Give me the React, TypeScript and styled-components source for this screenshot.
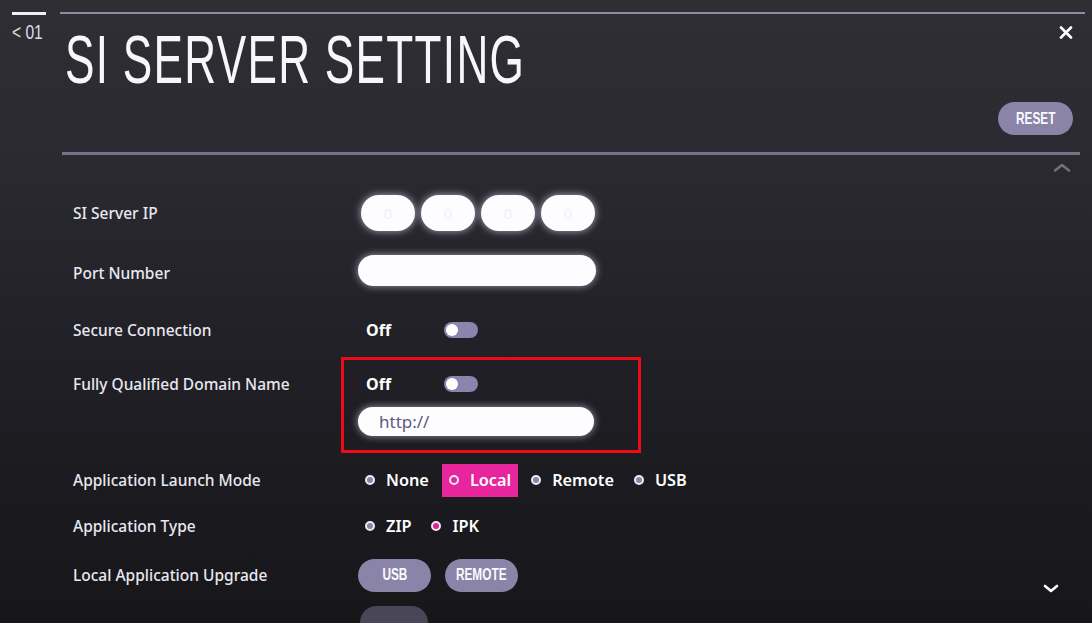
import React from 'react';
import styled, { createGlobalStyle } from 'styled-components';

const GlobalStyle = createGlobalStyle`
  html, body {
    margin: 0;
    padding: 0;
    background: #1b1a1f;
  }
  #root {
    width: 1092px;
    height: 623px;
    overflow: hidden;
  }
`;

export default function App() {
    return (
        <>
            <GlobalStyle />
            <Screen>
                <Rail>
                    <RailBar />
                    <RailLabel>&lt; 01</RailLabel>
                </Rail>
                <Main>
                    <TopRule />
                    <TitleBar>
                        <Title>SI SERVER SETTING</Title>
                        <CloseButton aria-label="close">
                            <svg width="14" height="13" viewBox="0 0 14 13">
                                <path d="M2 1.5 L12 11.5 M12 1.5 L2 11.5" stroke="#fff" strokeWidth="2.6" strokeLinecap="round" />
                            </svg>
                        </CloseButton>
                    </TitleBar>
                    <ResetRow>
                        <PillButton $width={75} $height={33}>
                            <ButtonText>RESET</ButtonText>
                        </PillButton>
                    </ResetRow>
                    <HeaderRule />
                    <ScrollUpRow>
                        <svg width="18" height="9" viewBox="0 0 18 9">
                            <path d="M2 7.5 L9 2 L16 7.5" stroke="#74727f" strokeWidth="2.4" fill="none" strokeLinecap="round" strokeLinejoin="round" />
                        </svg>
                    </ScrollUpRow>
                    <Form>
                        <Row $h={54}>
                            <Label>SI Server IP</Label>
                            <IpGroup>
                                {['0', '0', '0', '0'].map((d, i) => (
                                    <IpField key={i}>{d}</IpField>
                                ))}
                            </IpGroup>
                        </Row>
                        <Row $h={60}>
                            <Label $pad={6}>Port Number</Label>
                            <TextField $width={238} $height={31} />
                        </Row>
                        <Row $h={60}>
                            <Label>Secure Connection</Label>
                            <Switch />
                        </Row>
                        <Row $h={92} $top>
                            <Label $line={24} $pad={12}>Fully Qualified Domain Name</Label>
                            <ControlStack>
                                <Switch />
                                <TextField $width={236} $height={29}>http://</TextField>
                            </ControlStack>
                        </Row>
                        <Row $h={56}>
                            <Label>Application Launch Mode</Label>
                            <Options>
                                <Option>
                                    <Radio />None
                                </Option>
                                <Option $focused>
                                    <Radio $hollow />Local
                                </Option>
                                <Option>
                                    <Radio />Remote
                                </Option>
                                <Option>
                                    <Radio />USB
                                </Option>
                            </Options>
                        </Row>
                        <Row $h={36}>
                            <Label>Application Type</Label>
                            <Options>
                                <Option>
                                    <Radio />ZIP
                                </Option>
                                <Option>
                                    <Radio $selected />IPK
                                </Option>
                            </Options>
                        </Row>
                        <Row $h={62}>
                            <Label>Local Application Upgrade</Label>
                            <ButtonGroup>
                                <PillButton $width={73} $height={33}>
                                    <ButtonText>USB</ButtonText>
                                </PillButton>
                                <PillButton $width={73} $height={33}>
                                    <ButtonText>REMOTE</ButtonText>
                                </PillButton>
                            </ButtonGroup>
                        </Row>
                        <Row $h={40} $top>
                            <Label />
                            <FadedButton />
                        </Row>
                    </Form>
                    <ScrollDown>
                        <svg width="16" height="9" viewBox="0 0 16 9">
                            <path d="M2 2 L8 7 L14 2" stroke="#fff" strokeWidth="2.6" fill="none" strokeLinecap="round" strokeLinejoin="round" />
                        </svg>
                    </ScrollDown>
                </Main>
                <Annotation />
            </Screen>
        </>
    );
}

function Switch() {
    return (
        <SwitchRow>
            <SwitchText>Off</SwitchText>
            <Track>
                <Knob />
            </Track>
        </SwitchRow>
    );
}

const Screen = styled.div`
    position: relative;
    display: flex;
    width: 1092px;
    height: 623px;
    overflow: hidden;
    color: #fff;
    font-family: 'Noto Sans', 'Liberation Sans', sans-serif;
    background: linear-gradient(
        180deg,
        #2f2e35 0%,
        #2b2a31 25%,
        #232229 50%,
        #1c1b20 75%,
        #171619 100%
    );
`;

const Rail = styled.div`
    display: flex;
    flex-direction: column;
    width: 60px;
    flex-shrink: 0;
    padding: 12px 0 0 12px;
    box-sizing: border-box;
`;

const RailBar = styled.div`
    width: 34px;
    height: 3px;
    background: #f1f0f6;
`;

const RailLabel = styled.div`
    margin-top: 7px;
    font-family: 'Liberation Sans', sans-serif;
    font-size: 20px;
    line-height: 20px;
    color: #dddce6;
    white-space: nowrap;
    transform: scaleX(0.78);
    transform-origin: left center;
`;

const Main = styled.div`
    position: relative;
    flex: 1;
    display: flex;
    flex-direction: column;
    padding: 12px 7px 0 0;
    overflow: hidden;

    & > * {
        flex-shrink: 0;
    }
`;

const TopRule = styled.div`
    height: 2px;
    background: #8e8ca3;
`;

const TitleBar = styled.div`
    display: flex;
    justify-content: space-between;
    align-items: flex-start;
    height: 86px;
`;

const Title = styled.h1`
    margin: 11px 0 0 5px;
    font-family: 'Liberation Sans', sans-serif;
    font-weight: 400;
    font-size: 69px;
    line-height: 69px;
    letter-spacing: 2px;
    color: #f7f7fa;
    white-space: nowrap;
    transform: scaleX(0.64);
    transform-origin: left center;
`;

const CloseButton = styled.div`
    display: flex;
    margin: 12px 12px 0 0;
`;

const ResetRow = styled.div`
    display: flex;
    justify-content: flex-end;
    height: 52px;
    padding: 2px 12px 0 0;
    box-sizing: border-box;
`;

const PillButton = styled.div<{ $width: number; $height: number }>`
    display: flex;
    align-items: center;
    justify-content: center;
    width: ${({ $width }) => $width}px;
    height: ${({ $height }) => $height}px;
    border-radius: ${({ $height }) => $height / 2}px;
    background: #8a84a8;
`;

const ButtonText = styled.span`
    display: inline-block;
    font-family: 'Liberation Sans', sans-serif;
    font-weight: 700;
    font-size: 16px;
    color: #fbfaff;
    transform: scaleX(0.74);
`;

const HeaderRule = styled.div`
    height: 3px;
    margin: 0 5px 0 2px;
    background: #75738a;
`;

const ScrollUpRow = styled.div`
    display: flex;
    justify-content: flex-end;
    align-items: center;
    height: 31px;
    padding: 0 14px 6px 0;
    box-sizing: border-box;
`;

const Form = styled.div`
    display: flex;
    flex-direction: column;
    padding-left: 13px;
`;

const Row = styled.div<{ $h: number; $top?: boolean }>`
    display: flex;
    align-items: ${({ $top }) => ($top ? 'flex-start' : 'center')};
    height: ${({ $h }) => $h}px;
    flex-shrink: 0;
`;

const Label = styled.div<{ $line?: number; $pad?: number }>`
    width: 285px;
    flex-shrink: 0;
    padding-top: ${({ $pad }) => $pad ?? 0}px;
    font-size: 15.5px;
    font-weight: 500;
    line-height: ${({ $line }) => ($line ? `${$line}px` : '20px')};
    color: #e9e8f0;
`;

const IpGroup = styled.div`
    display: flex;
    gap: 6px;
    margin-left: 3px;
`;

const IpField = styled.div`
    display: flex;
    align-items: center;
    justify-content: center;
    width: 54px;
    height: 36px;
    border-radius: 18px;
    background: #fdfdff;
    box-shadow: 0 0 7px 1px rgba(235, 232, 255, 0.55);
    font-size: 15px;
    color: #f0f0f4;
`;

const TextField = styled.div<{ $width: number; $height: number }>`
    display: flex;
    align-items: center;
    width: ${({ $width }) => $width}px;
    height: ${({ $height }) => $height}px;
    padding-left: 21px;
    box-sizing: border-box;
    border-radius: ${({ $height }) => $height / 2}px;
    background: #fdfdff;
    box-shadow: 0 0 7px 1px rgba(235, 232, 255, 0.5);
    font-size: 17px;
    color: #5e5a7c;
`;

const ControlStack = styled.div`
    display: flex;
    flex-direction: column;
    gap: 11px;
    padding-top: 12px;
`;

const SwitchRow = styled.div`
    display: flex;
    align-items: center;
    height: 24px;
`;

const SwitchText = styled.span`
    width: 78px;
    margin-left: 8px;
    font-size: 16px;
    font-weight: 700;
    color: #fff;
`;

const Track = styled.div`
    display: flex;
    align-items: center;
    width: 34px;
    height: 16px;
    padding: 0 2px;
    box-sizing: border-box;
    border-radius: 8px;
    background: #8985ad;
`;

const Knob = styled.div`
    width: 12px;
    height: 12px;
    border-radius: 50%;
    background: #fff;
`;

const Options = styled.div`
    display: flex;
    gap: 6px;
`;

const Option = styled.div<{ $focused?: boolean }>`
    display: flex;
    align-items: center;
    gap: 11px;
    height: 33px;
    padding: 0 7px;
    background: ${({ $focused }) => ($focused ? '#e8259c' : 'transparent')};
    font-size: 16.3px;
    font-weight: 600;
    color: #fff;
`;

const Radio = styled.span<{ $hollow?: boolean; $selected?: boolean }>`
    width: 10px;
    height: 10px;
    box-sizing: border-box;
    border-radius: 50%;
    border: 2px solid #eeecf5;
    background: ${({ $hollow, $selected }) =>
        $hollow ? '#e8259c' : $selected ? '#e0248f' : '#8985a6'};
`;

const ButtonGroup = styled.div`
    display: flex;
    gap: 14px;
`;

const FadedButton = styled.div`
    width: 68px;
    height: 33px;
    margin: 0 0 0 2px;
    border-radius: 17px;
    background: #4a4659;
`;

const ScrollDown = styled.div`
    position: absolute;
    right: 33px;
    bottom: 30px;
    display: flex;
`;

const Annotation = styled.div`
    position: absolute;
    left: 341px;
    top: 357px;
    width: 300px;
    height: 96px;
    box-sizing: border-box;
    border: 3px solid #ee0a16;
    pointer-events: none;
`;
